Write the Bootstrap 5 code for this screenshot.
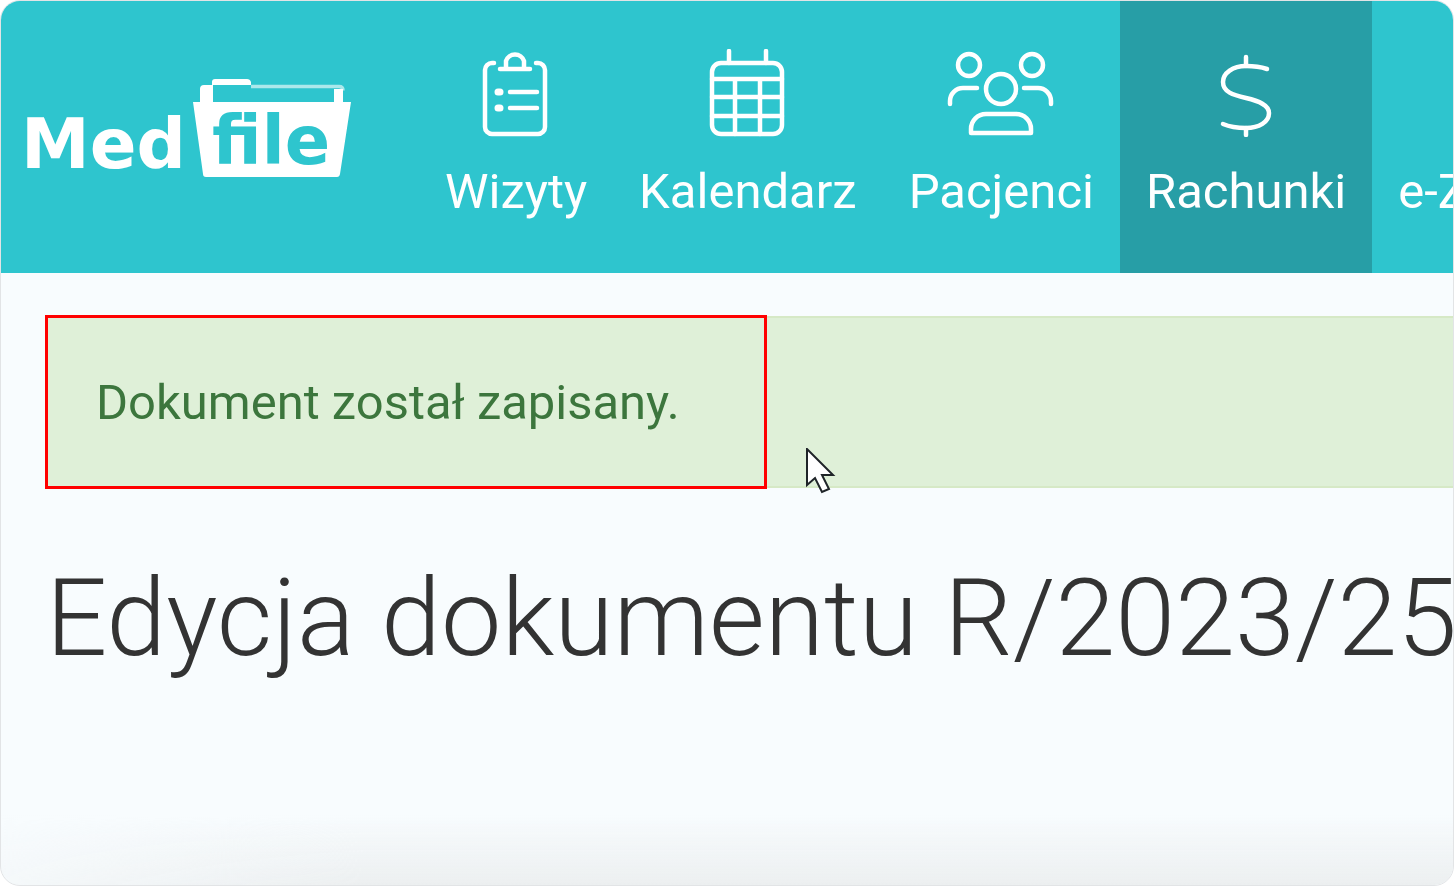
<!DOCTYPE html>
<html lang="pl">
<head>
  <meta charset="utf-8">
  <title>MedFile • Edycja dokumentu</title>
  <meta name="viewport" content="width=device-width, initial-scale=1">
  <link href="https://cdn.jsdelivr.net/npm/bootstrap@5.3.3/dist/css/bootstrap.min.css" rel="stylesheet">
  <style>
    html,body{height:100%;background:#fff;overflow:hidden}
    body{font-family:Roboto,"Liberation Sans",sans-serif}
    .app-frame{height:886px;background:#f8fcfe;border:1px solid #e2e4e6;border-radius:20px;overflow:hidden}
    .top-bar{height:272px;background:#2ec5ce;flex-wrap:nowrap}
    .brand-wrap{width:418px;padding:78px 0 0 20px;flex:none}
    .brand-med{font:700 69px/1 "DejaVu Sans",sans-serif;color:#fff;width:172px;flex:none;margin-top:31px}
    .brand-file{font:700 67px "DejaVu Sans",sans-serif;fill:#2ec5ce}
    .menu-link{height:272px;padding:48px 26px 0;color:#fff;font-size:49px;font-weight:400;line-height:1;flex:none;text-decoration:none}
    .menu-link:hover{color:#fff}
    .menu-link.active{background:#279ea6}
    .menu-link svg{display:block;margin:0 auto 30px;fill:none;stroke:#fff;stroke-width:4.500;stroke-linecap:round;stroke-linejoin:round}
    .page-body{padding:43px 0 0 44px;white-space:nowrap}
    .saved-alert{position:relative;margin:0 -40px 0 0;padding:61px 51px 60px;height:172px;font-size:48.950px;line-height:48px;background:#dff0d8;color:#3c763d;border:1px solid #d6e9c6;border-width:2px 0;border-radius:0}
    .red-mark{position:absolute;left:0;top:-3px;width:722px;height:174px;border:3px solid #f00}
    .mouse-arrow{position:absolute;left:761px;top:130px}
    .doc-title{margin:66px 0 0 1px;font-size:107.800px;font-weight:300;line-height:1.2;color:#333}
    .bottom-shade{position:absolute;left:0;right:0;bottom:0;height:70px;background:linear-gradient(#f8fcfe00,#eceff0);-webkit-mask-image:linear-gradient(90deg,#0004,#000 25%);mask-image:linear-gradient(90deg,#0004,#000 25%);pointer-events:none}
  </style>
</head>
<body>
<div class="app-frame position-relative">
  <nav class="top-bar d-flex align-items-start">
    <div class="brand-wrap d-flex align-items-start">
      <span class="brand-med">Med</span>
      <svg width="160" height="100" viewBox="0 0 160 100">
        <path d="M7 24V10q0-4 4-4h8V3q0-3 3-3h32q3 0 4 3v3H20v18zM141 10h9v14h-9z" fill="#fff"/>
        <path d="M58 7.500h88q4 0 4 4" fill="none" stroke="#fff" stroke-opacity=".6" stroke-width="3.500"/>
        <path d="M0 23H158L147 95q-.5 3-3 3H13q-3 0-3-3z" fill="#fff"/>
        <text class="brand-file" x="19" y="85">file</text>
      </svg>
    </div>
    <a class="menu-link" href="#">
      <svg width="110" height="88" viewBox="0 0 110 88">
        <path d="M33 14h-2a7 7 0 0 0-7 7v57a7 7 0 0 0 7 7h46a7 7 0 0 0 7-7V21a7 7 0 0 0-7-7h-2"/>
        <path d="M39 20h30M45 19v-7a9.500 9.500 0 0 1 18 0v7"/>
        <path d="M49 43h27M49 59h27"/>
        <path d="M37 43h2M37 59h2" stroke-width="7"/>
      </svg>
      Wizyty
    </a>
    <a class="menu-link" href="#">
      <svg width="110" height="88" viewBox="0 0 110 88">
        <rect x="19" y="14" width="70" height="71" rx="9"/>
        <path d="M36 2v12M73 2v12M19 30h70M19 48h70M19 67h70M42 30v55M67 30v55"/>
      </svg>
      Kalendarz
    </a>
    <a class="menu-link" href="#">
      <svg width="110" height="88" viewBox="0 0 110 88">
        <circle cx="23" cy="16" r="11"/><circle cx="86" cy="16" r="11"/><circle cx="55" cy="40" r="15"/>
        <path d="M31 39H17A13 13 0 0 0 4 52v3M78 39h14a13 13 0 0 1 13 13v3"/>
        <path d="M25 84v-4a15 15 0 0 1 15-15h30a15 15 0 0 1 15 15v4z"/>
      </svg>
      Pacjenci
    </a>
    <a class="menu-link active" href="#">
      <svg width="110" height="88" viewBox="0 0 110 88">
        <path d="M55 8v9M55 79v7"/>
        <path d="M76 20C70 18 62 17 55 17 42 17 32 24 32 33 32 43 42 46 55 49 68 52 78 56 78 64 78 73 68 79 55 79 47 79 39 78 32 75"/>
      </svg>
      Rachunki
    </a>
    <a class="menu-link" href="#">
      <svg width="110" height="88" viewBox="0 0 110 88"></svg>
      e-Zdrowie
    </a>
  </nav>

  <main class="page-body">
    <div class="alert saved-alert" role="alert">
      Dokument został zapisany.
      <span class="red-mark"></span>
      <svg class="mouse-arrow" width="30" height="46" viewBox="0 0 30 46">
        <path d="M1 1V37l8-7 7 14 7-3-7-14h11z" fill="#fff" stroke="#1f2428" stroke-width="2"/>
      </svg>
    </div>
    <h1 class="doc-title">Edycja dokumentu R/2023/25</h1>
  </main>
  <div class="bottom-shade"></div>
</div>
<script src="https://cdn.jsdelivr.net/npm/bootstrap@5.3.3/dist/js/bootstrap.bundle.min.js"></script>
</body>
</html>
